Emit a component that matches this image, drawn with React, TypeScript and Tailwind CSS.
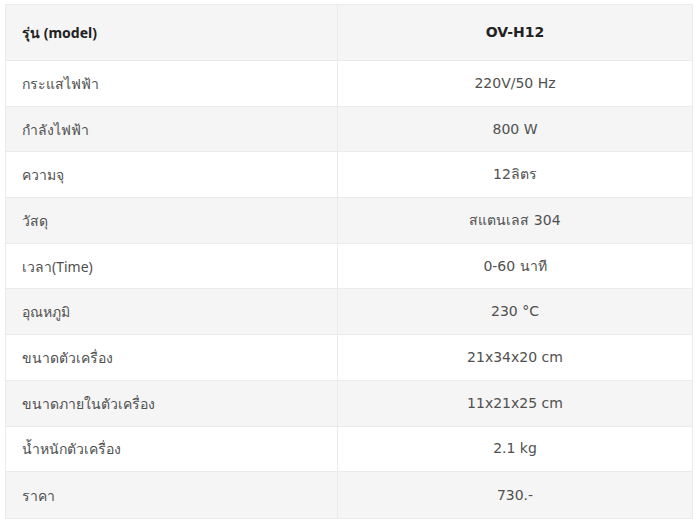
const ROWS: [string, string][] = [
  ['กระแสไฟฟ้า', '220V/50 Hz'],
  ['กำลังไฟฟ้า', '800 W'],
  ['ความจุ', '12ลิตร'],
  ['วัสดุ', 'สแตนเลส 304'],
  ['เวลา(Time)', '0-60 นาที'],
  ['อุณหภูมิ', '230 °C'],
  ['ขนาดตัวเครื่อง', '21x34x20 cm'],
  ['ขนาดภายในตัวเครื่อง', '11x21x25 cm'],
  ['น้ำหนักตัวเครื่อง', '2.1 kg'],
  ['ราคา', '730.-'],
]

const valueFont = { fontFamily: '"DejaVu Sans", "Noto Sans", sans-serif' }

export default function App() {
  return (
    <div className="w-[700px] h-[524px] bg-white pt-[4px] pl-[5px]" style={{ fontFamily: '"Noto Sans", sans-serif' }}>
      <div className="w-[688px] border border-[#ebebeb]">
        <div className="grid grid-cols-[332px_1fr] h-[56px] bg-[#f5f5f5] border-b border-[#ebebeb]">
          <div className="flex items-center pl-[16px] text-[14px] font-bold text-[#222] border-r border-[#ebebeb]">รุ่น (model)</div>
          <div className="flex items-center justify-center text-[14px] font-bold text-[#222]" style={valueFont}>OV-H12</div>
        </div>
        {ROWS.map(([k, v], i) => (
          <div
            key={k}
            className={`grid grid-cols-[332px_1fr] h-[45.7px] ${i % 2 === 1 ? 'bg-[#f5f5f5]' : 'bg-white'} ${i < ROWS.length - 1 ? 'border-b border-[#ebebeb]' : ''}`}
          >
            <div className="flex items-center pl-[16px] text-[14px] text-[#505050] border-r border-[#ebebeb]">{k}</div>
            <div className="flex items-center justify-center text-[14px] text-[#505050]" style={valueFont}>{v}</div>
          </div>
        ))}
      </div>
    </div>
  )
}
